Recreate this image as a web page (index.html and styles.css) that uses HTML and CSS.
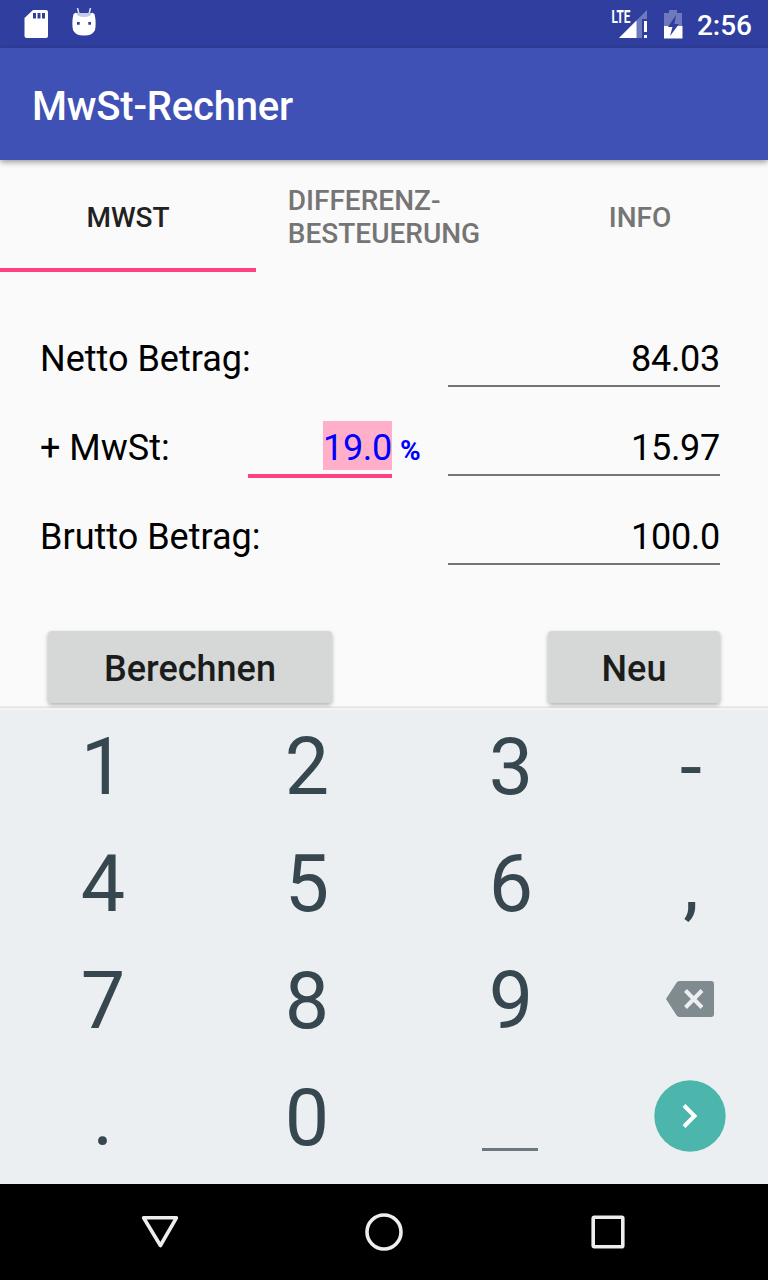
FILE: index.html
```html
<!DOCTYPE html>
<html lang="de">
<head>
  <meta charset="UTF-8" />
  <meta name="viewport" content="width=device-width, initial-scale=1.0"/>
  <title>MwSt-Rechner</title>
  <link rel="stylesheet" href="styles.css">
</head>
<body>
  <div class="statusbar">
    <svg class="icon-sd" width="24" height="28" viewBox="0 0 24 28">
      <path fill="#fff" fill-rule="evenodd" d="M9 0H22a2 2 0 0 1 2 2V26a2 2 0 0 1-2 2H2.500a2 2 0 0 1-2-2V8ZM9 3v5.500h3V3ZM13.500 3v5.500h3V3ZM18 3v5.500h3V3Z"/>
    </svg>
    <svg class="icon-android" width="24" height="28" viewBox="0 0 24 28">
      <path d="M5.500 0 7 6M18.500 0 17 6" stroke="#dfe2f2" stroke-width="1.500"/>
      <path d="M4 5h16v5H4z" fill="#c5cae9"/>
      <path fill="#fff" fill-rule="evenodd" d="M1.500 6 4 4.500Q5 9 12 9T20 4.500L22.500 6Q24.500 14 23 22 21 27.500 12 27.500T1 22Q-.5 14 1.500 6ZM5 14v2.700h2.700V14ZM16.300 14v2.700H19V14Z"/>
    </svg>
    <div class="status-right">
      <svg class="icon-netz" width="38" height="30" viewBox="0 0 38 30">
        <path d="M36 1V10H31V29H8Z" fill="#6f79bd"/>
        <path d="M25.500 11.500V29H8Z" fill="#fff"/>
        <path d="M33 12h3v11h-3zM33 26h3v3h-3z" fill="#fff"/>
        <text class="lte" x="0.500" y="14" textLength="19" lengthAdjust="spacingAndGlyphs">LTE</text>
      </svg>
      <svg class="icon-akku" width="20" height="29" viewBox="0 0 20 29">
        <path d="M1 3H6V0h8v3h5v13H1z" fill="#6f79bd"/>
        <path d="M1 16h18.500v12.500H1z" fill="#fff"/>
        <path d="M13 5 5 17h4.500L7 26l9-12h-4.500z" fill="#303f9f"/>
      </svg>
      <span class="uhr">2:56</span>
    </div>
  </div>

  <header class="toolbar">
    <h1>MwSt-Rechner</h1>
  </header>

  <nav class="tabs">
    <div class="tab active">MWST</div>
    <div class="tab">DIFFERENZ-<br>BESTEUERUNG</div>
    <div class="tab">INFO</div>
  </nav>

  <main class="rechner">
    <div class="zeile">
      <label for="netto">Netto Betrag:</label>
      <input class="feld" type="text" id="netto" value="84.03">
    </div>
    <div class="zeile">
      <label for="mwst">+ MwSt:</label>
      <div class="satz"><span class="auswahl">19.0</span></div>
      <span class="prozent">%</span>
      <input class="feld" type="text" id="mwst" value="15.97">
    </div>
    <div class="zeile">
      <label for="brutto">Brutto Betrag:</label>
      <input class="feld" type="text" id="brutto" value="100.0">
    </div>
    <div class="buttons">
      <button class="berechnen">Berechnen</button>
      <button class="neu">Neu</button>
    </div>
  </main>

  <div class="tastatur">
    <div class="taste">1</div>
    <div class="taste">2</div>
    <div class="taste">3</div>
    <div class="taste">-</div>
    <div class="taste">4</div>
    <div class="taste">5</div>
    <div class="taste">6</div>
    <div class="taste">,</div>
    <div class="taste">7</div>
    <div class="taste">8</div>
    <div class="taste">9</div>
    <div class="taste">
      <svg width="48" height="36" viewBox="0 0 48 36">
        <path d="M13.500 0H45a3 3 0 0 1 3 3V33a3 3 0 0 1-3 3H13.500Q11.500 36 10.500 34.300L0 18 10.500 1.700Q11.500 0 13.500 0Z" fill="#808b8f"/>
        <path d="M19.500 9.500 36 26.500M36 9.500 19.500 26.500" stroke="#eceff1" stroke-width="4"/>
      </svg>
    </div>
    <div class="taste">.</div>
    <div class="taste">0</div>
    <div class="taste"><span class="leertaste"></span></div>
    <div class="taste">
      <svg width="72" height="72" viewBox="0 0 72 72">
        <circle cx="36" cy="36" r="35.700" fill="#4db6ac"/>
        <path d="M30 25.500 40.500 36 30 46.500" fill="none" stroke="#fff" stroke-width="4"/>
      </svg>
    </div>
  </div>

  <footer class="navbar">
    <svg width="40" height="40" viewBox="0 0 40 40">
      <path d="M3.600 5.800H36.400L20.400 33.500Z"/>
    </svg>
    <svg width="40" height="40" viewBox="0 0 40 40">
      <circle cx="20" cy="20" r="17"/>
    </svg>
    <svg width="40" height="40" viewBox="0 0 40 40">
      <rect x="5.200" y="5.200" width="29.600" height="29.600" rx="1"/>
    </svg>
  </footer>
</body>
</html>
```
FILE: styles.css
```css
* {
  box-sizing: border-box;
}

body {
  display: flex;
  flex-direction: column;
  width: 768px;
  height: 1280px;
  margin: 0;
  overflow: hidden;
  font-family: Roboto, sans-serif;
  background-color: #fafafa;
  color: #000;
}

svg {
  display: block;
}

.statusbar {
  display: flex;
  align-items: center;
  height: 48px;
  padding: 0 16px 0 24px;
  background-color: #303f9f;
  color: #fff;
}

.icon-android {
  margin: -4px 0 0 24px;
}

.status-right {
  display: flex;
  align-items: center;
  margin-left: auto;
}

.icon-netz {
  overflow: visible;
}

.lte {
  font-size: 18px;
  font-weight: 700;
  fill: #fff;
}

.icon-akku {
  margin: 0 14px 0 14px;
}

.uhr {
  font-size: 28px;
  font-weight: 500;
  padding-top: 2px;
}

.toolbar {
  display: flex;
  align-items: center;
  height: 112px;
  padding: 4px 32px 0;
  background-color: #3f51b5;
  box-shadow: 0 2px 6px rgba(0, 0, 0, 0.4);
}

h1 {
  margin: 0;
  font-size: 40px;
  font-weight: 500;
  letter-spacing: -0.2px;
  color: #fff;
}

.tabs {
  display: grid;
  grid-template-columns: repeat(3, 256px);
  height: 112px;
}

.tab {
  display: flex;
  align-items: center;
  justify-content: center;
  padding-top: 6px;
  border-bottom: 4px solid transparent;
  font-size: 28px;
  font-weight: 500;
  line-height: 33px;
  color: #757575;
}

.tab.active {
  border-bottom-color: #ff4081;
  color: #212121;
}

.rechner {
  height: 436px;
  padding: 26px 48px 0 40px;
}

.zeile {
  display: flex;
  height: 89px;
  padding-top: 34px;
  font-size: 36px;
  line-height: 55px;
}

.feld {
  width: 272px;
  height: 55px;
  margin-left: auto;
  padding: 0;
  border: none;
  border-bottom: 2px solid #757575;
  background: none;
  font: inherit;
  line-height: 53px;
  letter-spacing: -0.3px;
  color: #000;
  text-align: right;
}

.zeile label {
  width: 208px;
  white-space: nowrap;
}

.satz {
  width: 144px;
  height: 57px;
  border-bottom: 4px solid #ff4081;
  letter-spacing: -0.3px;
  color: #0000ff;
  text-align: right;
}

.auswahl {
  padding: 6px 0 1px;
  background-color: #ffafc9;
}

.prozent {
  margin-left: 8px;
  font-size: 28px;
  font-weight: 700;
  line-height: 59px;
  color: #0000ff;
}

.buttons {
  display: flex;
  justify-content: space-between;
  padding: 66px 0 0 8px;
}

button {
  height: 72px;
  padding: 4px 0 0;
  border: none;
  border-radius: 4px;
  background-color: #d6d7d7;
  box-shadow: 0 2px 4px rgba(0, 0, 0, 0.3);
  font-family: inherit;
  font-size: 36px;
  font-weight: 500;
  color: #1b1c1c;
}

.berechnen {
  width: 284px;
}

.neu {
  width: 172px;
}

.tastatur {
  position: relative;
  display: grid;
  grid-template-columns: 204px 204px 204px 156px;
  grid-template-rows: repeat(4, 117px);
  height: 476px;
  border-top: 2px solid #f3f4f5;
  background-color: #eceff1;
  box-shadow: 0 -1px 2px rgba(0, 0, 0, 0.15);
}

.taste {
  display: flex;
  align-items: center;
  justify-content: center;
  padding-bottom: 2px;
  font-size: 79px;
  line-height: 115px;
  text-indent: 2px;
  color: #37474f;
}

.taste svg {
  margin-bottom: 6px;
}

.leertaste {
  width: 56px;
  height: 3px;
  margin-top: 62px;
  background-color: #6c787e;
}

.navbar {
  display: flex;
  align-items: center;
  justify-content: space-between;
  height: 96px;
  padding: 0 140px;
  background-color: #000;
}

.navbar svg {
  fill: none;
  stroke: #eee;
  stroke-width: 3.6;
  stroke-linejoin: round;
}
```
